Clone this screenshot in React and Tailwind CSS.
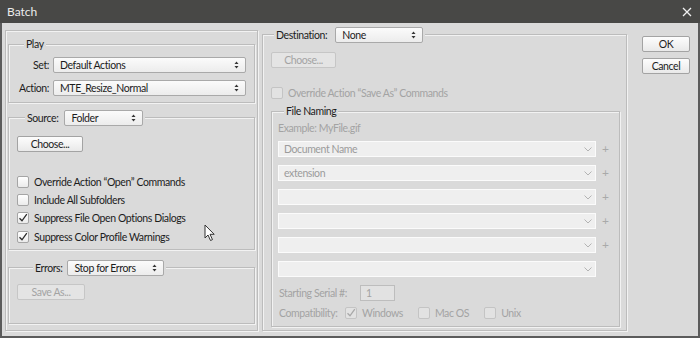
import React from 'react';

const font = { fontFamily: 'Lato, "Noto Sans", sans-serif' };

const Arrows = () => (
  <svg width="5" height="8" viewBox="0 0 5 8" className="shrink-0">
    <path d="M2.5 0.5 L4.5 3 L0.5 3 Z" fill="#333" />
    <path d="M2.5 7.5 L4.5 5 L0.5 5 Z" fill="#333" />
  </svg>
);

const Select = ({ value, className = '' }) => (
  <div
    className={`flex items-center justify-between h-[16px] pl-[6px] pr-[6px] bg-gradient-to-b from-[#fbfbfb] to-[#ececec] border border-[#a9a9a9] rounded-[2px] text-[10.5px] text-[#1c1c1c] ${className}`}
  >
    <span className="leading-none whitespace-nowrap">{value}</span>
    <Arrows />
  </div>
);

const Button = ({ label, disabled, className = '' }) => (
  <div
    className={`flex items-center justify-center h-[16px] rounded-[2px] border text-[10.5px] leading-none ${
      disabled
        ? 'border-[#c6c6c6] bg-[#e4e4e4] text-[#a3a3a3]'
        : 'border-[#a3a3a3] bg-gradient-to-b from-[#fdfdfd] to-[#e9e9e9] text-[#1c1c1c]'
    } ${className}`}
  >
    {label}
  </div>
);

const Check = ({ checked, disabled }) => (
  <div
    className={`w-[12px] h-[12px] shrink-0 rounded-[2px] border flex items-center justify-center ${
      disabled ? 'border-[#c4c4c4] bg-[#e2e2e2]' : 'border-[#a5a5a5] bg-gradient-to-b from-[#ffffff] to-[#ebebeb]'
    }`}
  >
    {checked && (
      <svg width="10" height="10" viewBox="0 0 10 10">
        <path
          d="M1.5 5.2 L4 7.8 L8.8 1.2"
          fill="none"
          stroke={disabled ? '#a8a8a8' : '#2a2a2a'}
          strokeWidth="1.3"
        />
      </svg>
    )}
  </div>
);

const CheckRow = ({ label, checked, disabled, className = '' }) => (
  <div className={`flex items-center gap-[5px] h-[12px] ${className}`}>
    <Check checked={checked} disabled={disabled} />
    <span className={`text-[10.5px] leading-none whitespace-nowrap ${disabled ? 'text-[#a3a3a3]' : 'text-[#1c1c1c]'}`}>
      {label}
    </span>
  </div>
);

const etched = 'border border-[#bcbcbc] shadow-[inset_1px_1px_0_#f2f2f2,1px_1px_0_#f2f2f2]';

const NameRow = ({ value, plus = true }) => (
  <div className="flex items-center h-[16px]">
    <div className="flex w-[318px] h-[16px] border border-[#fbfbfb] bg-[#efefef]">
      <div className="flex-1 flex items-center pl-[5px] text-[10.5px] leading-none text-[#9b9b9b]">{value}</div>
      <div className="w-[15px] flex items-center justify-center">
        <svg width="8" height="5" viewBox="0 0 8 5">
          <path d="M0.5 0.5 L4 4 L7.5 0.5" fill="none" stroke="#b3b3b3" strokeWidth="1" />
        </svg>
      </div>
    </div>
    {plus && <span className="ml-[6px] text-[12px] leading-none text-[#a9a9a9]">+</span>}
  </div>
);

const Cursor = () => (
  <svg width="12" height="18" viewBox="0 0 12 18">
    <path
      d="M1 1 L1 14 L4 11 L6.5 16.5 L8.5 15.6 L6 10.3 L10.2 10.3 Z"
      fill="#ffffff"
      stroke="#333"
      strokeWidth="1"
      strokeLinejoin="round"
    />
  </svg>
);

export default function App() {
  return (
    <div style={font} className="w-[700px] h-[338px] flex flex-col bg-[#dadada] overflow-hidden select-none tracking-[-0.4px]">
      {/* Title bar */}
      <div className="h-[23px] shrink-0 bg-[#484846] flex items-center justify-between pl-[7px] pr-[8px]">
        <span className="text-[12px] text-[#ececec] leading-none tracking-normal">Batch</span>
        <svg width="10" height="10" viewBox="0 0 10 10">
          <path d="M1 1 L9 9 M9 1 L1 9" stroke="#f0f0f0" strokeWidth="1.3" />
        </svg>
      </div>

      <div className="flex-1 flex border-x-2 border-b-2 border-[#5b5b5b] bg-[#dadada]">
        <div className="flex pl-[3px] pt-[7px]">
          {/* Left panel */}
          <div className={`w-[253px] h-[301px] ${etched} pl-[2px] pr-[2px] flex flex-col`}>
            {/* Play */}
            <div className={`relative mt-[13px] w-[247px] h-[59px] ${etched}`}>
              <span className="absolute left-[15px] top-[-8px] px-[2px] bg-[#dadada] text-[10.5px] leading-[14px] text-[#1c1c1c]">
                Play
              </span>
              <div className="flex items-center mt-[12px]">
                <span className="w-[40px] text-right text-[10.5px] leading-none text-[#1c1c1c]">Set:</span>
                <Select value="Default Actions" className="ml-[4px] w-[193px]" />
              </div>
              <div className="flex items-center mt-[7px]">
                <span className="w-[40px] text-right text-[10.5px] leading-none text-[#1c1c1c]">Action:</span>
                <Select value="MTE_Resize_Normal" className="ml-[4px] w-[193px]" />
              </div>
            </div>

            {/* Source */}
            <div className={`relative mt-[14px] w-[247px] h-[133px] ${etched} pl-[8px]`}>
              <div className="absolute left-[16px] top-[-8px] flex items-center gap-[6px] px-[2px] bg-[#dadada]">
                <span className="text-[10.5px] leading-none text-[#1c1c1c]">Source:</span>
                <Select value="Folder" className="w-[79px]" />
              </div>
              <Button label="Choose..." className="mt-[18px] w-[66px]" />
              <CheckRow label={'Override Action \u201cOpen\u201d Commands'} className="mt-[24px]" />
              <CheckRow label="Include All Subfolders" className="mt-[6px]" />
              <CheckRow label="Suppress File Open Options Dialogs" checked className="mt-[6px]" />
              <CheckRow label="Suppress Color Profile Warnings" checked className="mt-[7px]" />
              <div className="absolute left-[195px] top-[106px]">
                <Cursor />
              </div>
            </div>

            {/* Errors */}
            <div className={`relative mt-[17px] w-[247px] h-[57px] ${etched} pl-[8px]`}>
              <div className="absolute left-[24px] top-[-8px] flex items-center gap-[5px] px-[2px] bg-[#dadada]">
                <span className="text-[10.5px] leading-none text-[#1c1c1c]">Errors:</span>
                <Select value="Stop for Errors" className="w-[97px]" />
              </div>
              <Button label="Save As..." disabled className="mt-[16px] w-[68px]" />
            </div>
          </div>

          {/* Right panel */}
          <div className={`relative ml-[4px] mt-[4px] w-[365px] h-[297px] ${etched} pl-[8px]`}>
            <div className="absolute left-[11px] top-[-8px] flex items-center gap-[8px] px-[2px] bg-[#dadada]">
              <span className="text-[10.5px] leading-none text-[#1c1c1c]">Destination:</span>
              <Select value="None" className="w-[88px]" />
            </div>
            <Button label="Choose..." disabled className="mt-[17px] w-[65px]" />
            <CheckRow label={'Override Action \u201cSave As\u201d Commands'} disabled className="mt-[19px]" />

            {/* File Naming */}
            <div className={`relative mt-[12px] w-[349px] h-[216px] ${etched} pl-[6px]`}>
              <span className="absolute left-[12px] top-[-8px] px-[2px] bg-[#dadada] text-[10.5px] leading-[14px] text-[#1c1c1c]">
                File Naming
              </span>
              <div className="mt-[11px] h-[12px] text-[10.5px] leading-none text-[#a3a3a3]">Example: MyFile.gif</div>
              <div className="mt-[6px] flex flex-col gap-[8px]">
                <NameRow value="Document Name" />
                <NameRow value="extension" />
                <NameRow value="" />
                <NameRow value="" />
                <NameRow value="" />
                <NameRow value="" plus={false} />
              </div>
              <div className="flex items-center mt-[8px] h-[16px]">
                <span className="w-[82px] pl-[1px] whitespace-nowrap text-[10.5px] leading-none text-[#a3a3a3]">Starting Serial #:</span>
                <div className="w-[35px] h-[16px] border border-[#bdbdbd] bg-[#e2e2e2] pl-[5px] flex items-center text-[10.5px] leading-none text-[#a3a3a3]">
                  1
                </div>
              </div>
              <div className="flex items-center mt-[6px] h-[12px]">
                <span className="w-[67px] pl-[1px] whitespace-nowrap text-[10.5px] leading-none text-[#a3a3a3]">Compatibility:</span>
                <CheckRow label="Windows" checked disabled />
                <CheckRow label="Mac OS" disabled className="ml-[15px]" />
                <CheckRow label="Unix" disabled className="ml-[15px]" />
              </div>
            </div>
          </div>

          {/* Buttons */}
          <div className="ml-[15px] mt-[6px] flex flex-col gap-[6px]">
            <Button label="OK" className="w-[48px] border-[#6f6f6f]" />
            <Button label="Cancel" className="w-[48px]" />
          </div>
        </div>
      </div>
    </div>
  );
}
